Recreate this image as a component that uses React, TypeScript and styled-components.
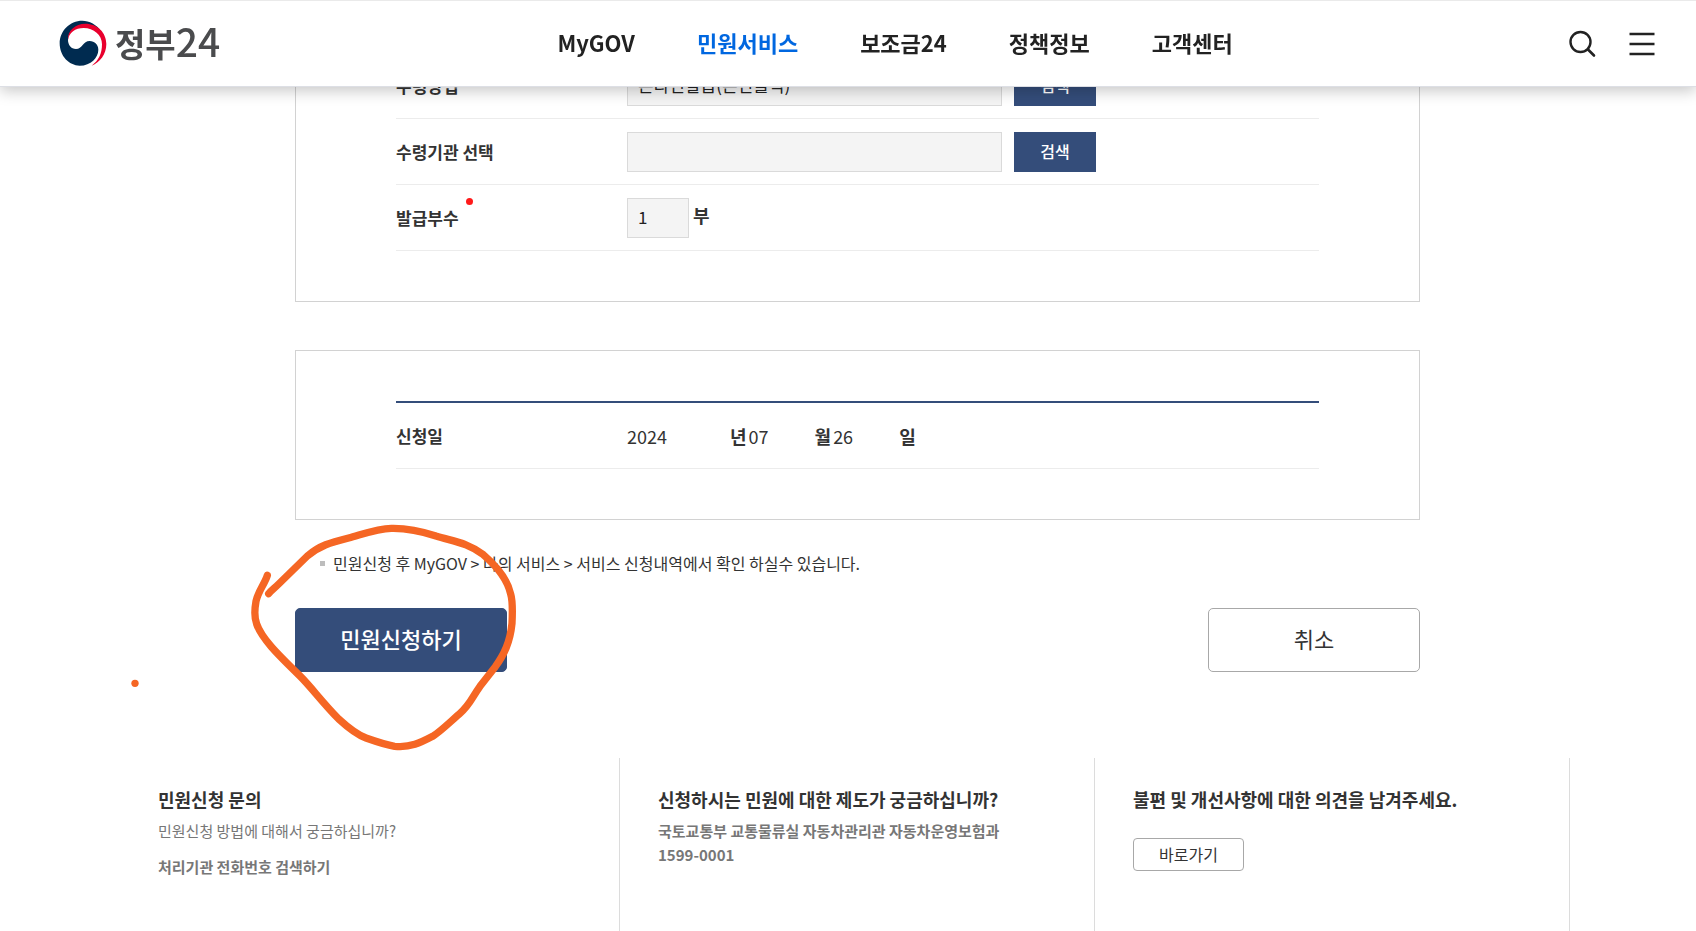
import React from "react";
import styled, { createGlobalStyle, css } from "styled-components";

const navy = "#344d7a";
const ink = "#333333";

const GlobalStyle = createGlobalStyle`
  *, *::before, *::after { box-sizing: border-box; }
  body {
    margin: 0;
    background: #ffffff;
    color: ${ink};
    font-family: "Noto Sans CJK KR", "Noto Sans", sans-serif;
    font-size: 17px;
    line-height: 24px;
  }
  button, input { font-family: inherit; }
  h2, p, ul { margin: 0; padding: 0; }
  a { color: inherit; text-decoration: none; }
`;

const Page = styled.div`
  display: flex;
  flex-direction: column;
  min-height: 100vh;
`;

/* ---------- header ---------- */

const Header = styled.header`
  position: fixed;
  top: 0;
  left: 0;
  right: 0;
  z-index: 10;
  display: flex;
  align-items: center;
  height: 87px;
  padding: 0 40px 0 59px;
  background: #ffffff;
  border-top: 1px solid #eaeaea;
  border-bottom: 1px solid #dddfe5;
  box-shadow: 0 4px 14px rgba(0, 0, 0, 0.22);
`;

const Logo = styled.a`
  display: flex;
  align-items: center;
  gap: 8px;
  color: #4a4b4d;
  font-size: 33px;
  font-weight: 700;
  line-height: 48px;
`;

const LogoName = styled.span`
  padding-bottom: 4px;
`;

const LogoNumber = styled.span`
  font-size: 39px;
  font-weight: 500;
`;

const Nav = styled.nav`
  display: flex;
  flex: 1;
  justify-content: center;
  gap: 62px;
  padding: 0 0 4px 2px;
`;

const NavLink = styled.a<{ $active?: boolean }>`
  color: ${(p) => (p.$active ? "#0067e0" : "#222222")};
  font-size: 22px;
  font-weight: 700;
  line-height: 32px;
  white-space: nowrap;
`;

const Tools = styled.div`
  display: flex;
  gap: 32px;
`;

const IconButton = styled.button`
  display: flex;
  padding: 0;
  border: 0;
  background: none;
  color: #222222;
  cursor: pointer;
`;

/* ---------- form ---------- */

const Main = styled.main`
  padding: 2px 0 0 19px;
`;

const Content = styled.div`
  width: 100%;
  max-width: 1125px;
  margin: 0 auto;
`;

const Panel = styled.section`
  padding: 50px 100px;
  border: 1px solid #d2d2d2;

  & + & {
    margin-top: 48px;
  }
`;

const Rows = styled.div<{ $ruled?: boolean }>`
  ${(p) =>
    p.$ruled &&
    css`
      border-top: 2px solid ${navy};
    `}
`;

const Row = styled.div`
  display: flex;
  align-items: center;
  height: 66px;
  border-bottom: 1px solid #ececec;
`;

const LabelCell = styled.div`
  display: flex;
  flex: 0 0 231px;
`;

const Label = styled.label`
  position: relative;
  font-weight: 700;
`;

const RequiredDot = styled.span`
  position: absolute;
  top: -8px;
  left: 100%;
  width: 7px;
  height: 7px;
  margin-left: 7px;
  border-radius: 50%;
  background: #ff1a1a;
`;

const Field = styled.input<{ $width: number }>`
  width: ${(p) => p.$width}px;
  height: 40px;
  padding: 0 10px 2px;
  border: 1px solid #dadada;
  border-radius: 0;
  background: #f4f4f4;
  color: #222222;
  font-size: 17px;
`;

const Unit = styled.span`
  margin-left: 4px;
  padding-bottom: 5px;
  font-size: 18px;
  font-weight: 700;
`;

const SearchButton = styled.button`
  width: 82px;
  height: 40px;
  margin-left: 12px;
  padding: 0 0 2px;
  border: 0;
  background: ${navy};
  color: #ffffff;
  font-size: 16px;
  font-weight: 500;
  cursor: pointer;
`;

const DateField = styled.input<{ $wide?: boolean }>`
  width: ${(p) => (p.$wide ? 103 : 68)}px;
  padding: 0 0 0 ${(p) => (p.$wide ? 0 : 2)}px;
  border: 0;
  background: none;
  color: ${ink};
  font-size: 18px;
  line-height: 24px;
`;

const DateUnit = styled.span`
  font-size: 18px;
  font-weight: 700;
`;

/* ---------- submit area ---------- */

const Submit = styled.section`
  position: relative;
  padding-top: 31px;
`;

const Notes = styled.ul`
  list-style: none;
`;

const Note = styled.li`
  display: flex;
  align-items: center;
  gap: 8px;
  padding-left: 25px;
  font-size: 16px;

  &::before {
    content: "";
    width: 5px;
    height: 5px;
    background: #bdbdbd;
  }
`;

const Actions = styled.div`
  display: flex;
  justify-content: space-between;
  margin-top: 33px;
`;

const ActionButton = styled.button<{ $primary?: boolean }>`
  width: 212px;
  height: 64px;
  padding: 0 0 4px;
  border: 1px solid ${(p) => (p.$primary ? navy : "#a8a8a8")};
  border-radius: 5px;
  background: ${(p) => (p.$primary ? navy : "#ffffff")};
  color: ${(p) => (p.$primary ? "#ffffff" : ink)};
  font-size: 22px;
  font-weight: ${(p) => (p.$primary ? 500 : 400)};
  cursor: pointer;
`;

const Marker = styled.svg`
  position: absolute;
  top: -10px;
  left: -195px;
  pointer-events: none;
`;

/* ---------- help columns ---------- */

const Help = styled.aside`
  display: flex;
  flex: 1;
  margin-top: 86px;
  padding-left: 19px;
`;

const HelpColumns = styled.div`
  display: grid;
  grid-template-columns: repeat(3, 1fr);
  width: 100%;
  max-width: 1425px;
  margin: 0 auto;
`;

const HelpColumn = styled.section`
  padding: 28px 12px 28px 38px;
  border-right: 1px solid #dcdcdc;

  &:first-child {
    padding-left: 13px;
  }
`;

const HelpTitle = styled.h2`
  margin-bottom: 7px;
  font-size: 18px;
  font-weight: 700;
  line-height: 26px;
`;

const HelpText = styled.p<{ $strong?: boolean }>`
  color: #777777;
  font-size: 15px;
  font-weight: ${(p) => (p.$strong ? 700 : 400)};

  & + a {
    display: block;
    margin-top: 12px;
  }
`;

const HelpLink = styled.a`
  color: #777777;
  font-size: 15px;
  font-weight: 700;
`;

const GoButton = styled.button`
  width: 111px;
  height: 33px;
  margin-top: 19px;
  padding: 0 0 2px;
  border: 1px solid #a8a8a8;
  border-radius: 4px;
  background: #ffffff;
  color: ${ink};
  font-size: 16px;
  line-height: 24px;
  cursor: pointer;
`;

const menu = ["MyGOV", "민원서비스", "보조금24", "정책정보", "고객센터"];

function Emblem() {
  return (
    <svg width="48" height="47" viewBox="176 60 144 141" aria-hidden="true">
      <path
        fill="#002b50"
        d="M304 96C290 73 266 62 246 62C208 62 178 93 178 130C178 168 206 197 238 197C272 197 294 172 294 149C294 134 283 123 268 123C248 123 246 147 227 147C212 147 203 134 203 120C203 95 225 74 255 74C275 74 292 82 304 96Z"
      />
      <path
        fill="#e9002d"
        d="M203 120C201 92 225 71 255 71C292 71 318 98 318 132C318 163 299 187 274 197C295 182 305 160 305 133C305 105 280 84 250 84C225 84 206 98 203 120Z"
      />
    </svg>
  );
}

export default function App() {
  return (
    <Page>
      <GlobalStyle />
      <Header>
        <Logo href="#">
          <Emblem />
          <LogoName>
            정부<LogoNumber>24</LogoNumber>
          </LogoName>
        </Logo>
        <Nav>
          {menu.map((item) => (
            <NavLink key={item} href="#" $active={item === "민원서비스"}>
              {item}
            </NavLink>
          ))}
        </Nav>
        <Tools>
          <IconButton type="button" aria-label="검색">
            <svg width="28" height="28" viewBox="0 0 28 28" fill="none" stroke="currentColor" strokeLinecap="round">
              <circle cx="12.5" cy="12" r="10" strokeWidth="2.4" />
              <path d="M20 19.5L26 25.5" strokeWidth="2.6" />
            </svg>
          </IconButton>
          <IconButton type="button" aria-label="전체메뉴">
            <svg width="28" height="28" viewBox="0 0 28 28" fill="none" stroke="currentColor" strokeWidth="2.4">
              <path d="M1.5 4H26.5M1.5 14H26.5M1.5 24H26.5" />
            </svg>
          </IconButton>
        </Tools>
      </Header>

      <Main>
        <Content>
          <Panel>
            <Rows>
              <Row>
                <LabelCell>
                  <Label htmlFor="method">수령방법</Label>
                </LabelCell>
                <Field id="method" $width={375} readOnly defaultValue="온라인발급(본인출력)" />
                <SearchButton type="button">검색</SearchButton>
              </Row>
              <Row>
                <LabelCell>
                  <Label htmlFor="office">수령기관 선택</Label>
                </LabelCell>
                <Field id="office" $width={375} readOnly />
                <SearchButton type="button">검색</SearchButton>
              </Row>
              <Row>
                <LabelCell>
                  <Label htmlFor="copies">
                    발급부수
                    <RequiredDot />
                  </Label>
                </LabelCell>
                <Field id="copies" $width={62} defaultValue="1" />
                <Unit>부</Unit>
              </Row>
            </Rows>
          </Panel>

          <Panel>
            <Rows $ruled>
              <Row>
                <LabelCell>
                  <Label htmlFor="year">신청일</Label>
                </LabelCell>
                <DateField id="year" $wide readOnly defaultValue="2024" />
                <DateUnit>년</DateUnit>
                <DateField aria-label="월" readOnly defaultValue="07" />
                <DateUnit>월</DateUnit>
                <DateField aria-label="일" readOnly defaultValue="26" />
                <DateUnit>일</DateUnit>
              </Row>
            </Rows>
          </Panel>

          <Submit>
            <Notes>
              <Note>민원신청 후 MyGOV &gt; 나의 서비스 &gt; 서비스 신청내역에서 확인 하실수 있습니다.</Note>
            </Notes>
            <Actions>
              <ActionButton type="button" $primary>
                민원신청하기
              </ActionButton>
              <ActionButton type="button">취소</ActionButton>
            </Actions>
            <Marker width="450" height="250" viewBox="0 0 1350 750" aria-hidden="true">
              <path
                fill="none"
                stroke="#f56624"
                strokeWidth="22"
                strokeLinecap="round"
                strokeLinejoin="round"
                d="M502 196C494 222 474 244 468 274C463 302 463 324 470 342C484 384 530 430 600 498C636 534 664 574 716 627C752 660 776 676 798 684C832 696 866 706 884 709C930 714 962 698 998 679C1022 664 1050 636 1078 612C1112 582 1112 568 1140 529L1186 470C1212 434 1230 398 1236 340C1238 300 1238 272 1232 252C1222 206 1192 170 1150 134C1104 98 1060 94 1008 78C960 62 920 54 874 55C832 56 790 72 746 84C690 98 660 106 622 138L536 222C522 236 514 240 506 251"
              />
              <circle cx="105" cy="520" r="11" fill="#f56624" />
            </Marker>
          </Submit>
        </Content>
      </Main>

      <Help>
        <HelpColumns>
          <HelpColumn>
            <HelpTitle>민원신청 문의</HelpTitle>
            <HelpText>민원신청 방법에 대해서 궁금하십니까?</HelpText>
            <HelpLink href="#">처리기관 전화번호 검색하기</HelpLink>
          </HelpColumn>
          <HelpColumn>
            <HelpTitle>신청하시는 민원에 대한 제도가 궁금하십니까?</HelpTitle>
            <HelpText $strong>국토교통부 교통물류실 자동차관리관 자동차운영보험과</HelpText>
            <HelpText $strong>1599-0001</HelpText>
          </HelpColumn>
          <HelpColumn>
            <HelpTitle>불편 및 개선사항에 대한 의견을 남겨주세요.</HelpTitle>
            <GoButton type="button">바로가기</GoButton>
          </HelpColumn>
        </HelpColumns>
      </Help>
    </Page>
  );
}
